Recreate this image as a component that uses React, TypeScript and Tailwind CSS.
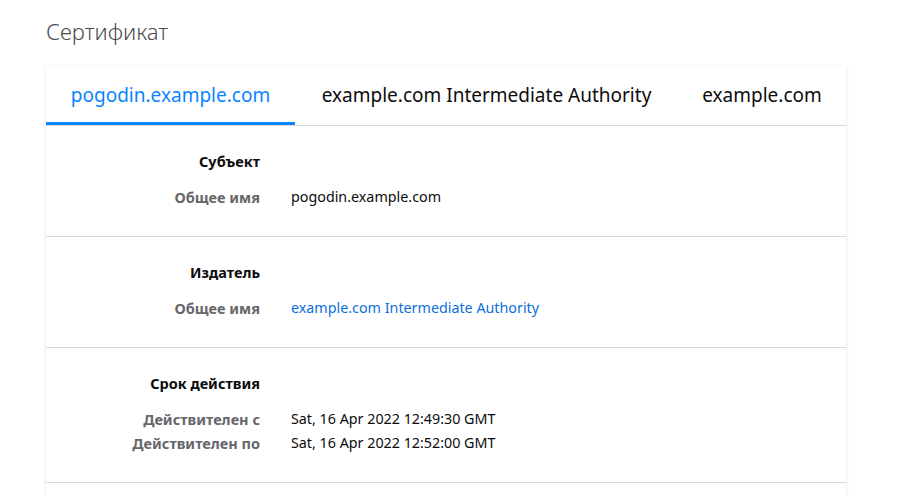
import React from "react";

const tabs = [
  { name: "pogodin.example.com", w: "w-[249px]" },
  { name: "example.com Intermediate Authority", w: "w-[383px]" },
  { name: "example.com", w: "w-[168px]" },
];

type Row = { label: string; value: string; link?: boolean };

const sections: { title: string; rows: Row[] }[] = [
  { title: "Субъект", rows: [{ label: "Общее имя", value: "pogodin.example.com" }] },
  {
    title: "Издатель",
    rows: [{ label: "Общее имя", value: "example.com Intermediate Authority", link: true }],
  },
  {
    title: "Срок действия",
    rows: [
      { label: "Действителен с", value: "Sat, 16 Apr 2022 12:49:30 GMT" },
      { label: "Действителен по", value: "Sat, 16 Apr 2022 12:52:00 GMT" },
    ],
  },
];

export default function App() {
  return (
    <div className="h-[496px] overflow-hidden bg-white pl-[46px] pt-[16px] font-['Noto_Sans',sans-serif] text-[#0c0c0d]">
      <h1 className="text-[22px] font-light leading-[30px] text-[#4a4a4f]">Сертификат</h1>
      <div className="mt-[20px] w-[800px] bg-white shadow-[0_1px_4px_rgba(12,12,13,0.1)]">
        <div className="flex border-b border-[#d7d7db]">
          {tabs.map((t, i) => (
            <div
              key={t.name}
              className={`flex h-[59px] shrink-0 items-center justify-center whitespace-nowrap border-b-[3px] pt-[3px] text-[19px] ${t.w} ${
                i === 0 ? "border-[#0a84ff] text-[#0a84ff]" : "border-transparent text-[#0c0c0d]"
              }`}
            >
              {t.name}
            </div>
          ))}
        </div>
        {sections.map((s) => (
          <div key={s.title} className="border-b border-[#d7d7db] pt-[23px] pb-[27px]">
            <div className="grid grid-cols-[214px_1fr] gap-x-[31px] text-[14.5px] leading-[24px]">
              <div className="text-right font-bold">{s.title}</div>
              <div />
            </div>
            <div className="mt-[12px] grid grid-cols-[214px_1fr] gap-x-[31px] text-[14.3px] leading-[24px]">
              {s.rows.map((r) => (
                <React.Fragment key={r.label}>
                  <div className="text-right text-[14.5px] font-bold text-[#66666b]">{r.label}</div>
                  <div className={r.link ? "text-[#0a6fdc]" : ""}>{r.value}</div>
                </React.Fragment>
              ))}
            </div>
          </div>
        ))}
        <div className="h-[40px]" />
      </div>
    </div>
  );
}
